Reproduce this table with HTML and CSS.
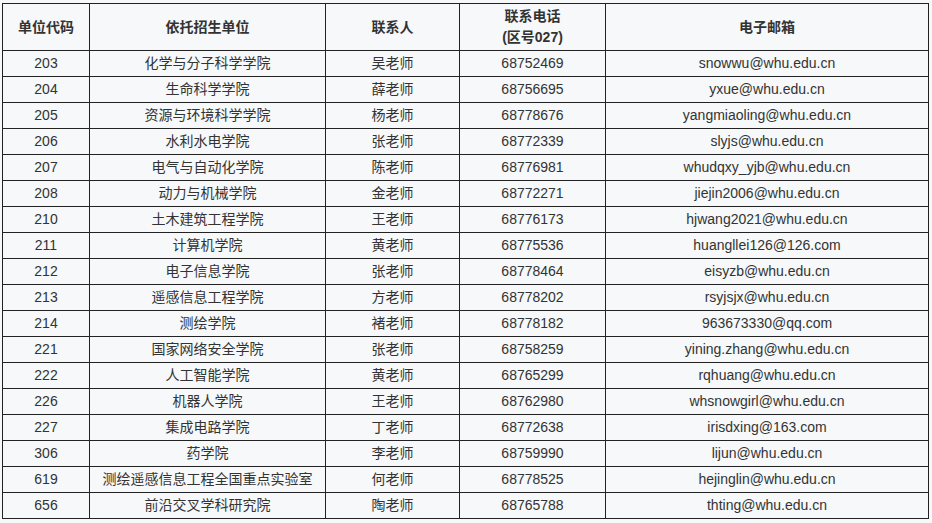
FILE: index.html
```html
<!DOCTYPE html>
<html lang="zh-CN">
<head>
<meta charset="utf-8">
<link rel="stylesheet" href="styles.css">
</head>
<body>
<div class="wrap">
<table class="contacts">
  <colgroup>
    <col class="c1"><col class="c2"><col class="c3"><col class="c4"><col class="c5">
  </colgroup>
  <thead>
    <tr><th>单位代码</th><th>依托招生单位</th><th>联系人</th><th>联系电话<br>(区号027)</th><th>电子邮箱</th></tr>
  </thead>
  <tbody>
    <tr><td>203</td><td>化学与分子科学学院</td><td>吴老师</td><td>68752469</td><td>snowwu@whu.edu.cn</td></tr>
    <tr><td>204</td><td>生命科学学院</td><td>薛老师</td><td>68756695</td><td>yxue@whu.edu.cn</td></tr>
    <tr><td>205</td><td>资源与环境科学学院</td><td>杨老师</td><td>68778676</td><td>yangmiaoling@whu.edu.cn</td></tr>
    <tr><td>206</td><td>水利水电学院</td><td>张老师</td><td>68772339</td><td>slyjs@whu.edu.cn</td></tr>
    <tr><td>207</td><td>电气与自动化学院</td><td>陈老师</td><td>68776981</td><td>whudqxy_yjb@whu.edu.cn</td></tr>
    <tr><td>208</td><td>动力与机械学院</td><td>金老师</td><td>68772271</td><td>jiejin2006@whu.edu.cn</td></tr>
    <tr><td>210</td><td>土木建筑工程学院</td><td>王老师</td><td>68776173</td><td>hjwang2021@whu.edu.cn</td></tr>
    <tr><td>211</td><td>计算机学院</td><td>黄老师</td><td>68775536</td><td>huangllei126@126.com</td></tr>
    <tr><td>212</td><td>电子信息学院</td><td>张老师</td><td>68778464</td><td>eisyzb@whu.edu.cn</td></tr>
    <tr><td>213</td><td>遥感信息工程学院</td><td>方老师</td><td>68778202</td><td>rsyjsjx@whu.edu.cn</td></tr>
    <tr><td>214</td><td>测绘学院</td><td>褚老师</td><td>68778182</td><td>963673330@qq.com</td></tr>
    <tr><td>221</td><td>国家网络安全学院</td><td>张老师</td><td>68758259</td><td>yining.zhang@whu.edu.cn</td></tr>
    <tr><td>222</td><td>人工智能学院</td><td>黄老师</td><td>68765299</td><td>rqhuang@whu.edu.cn</td></tr>
    <tr><td>226</td><td>机器人学院</td><td>王老师</td><td>68762980</td><td>whsnowgirl@whu.edu.cn</td></tr>
    <tr><td>227</td><td>集成电路学院</td><td>丁老师</td><td>68772638</td><td>irisdxing@163.com</td></tr>
    <tr><td>306</td><td>药学院</td><td>李老师</td><td>68759990</td><td>lijun@whu.edu.cn</td></tr>
    <tr><td>619</td><td>测绘遥感信息工程全国重点实验室</td><td>何老师</td><td>68778525</td><td>hejinglin@whu.edu.cn</td></tr>
    <tr><td>656</td><td>前沿交叉学科研究院</td><td>陶老师</td><td>68765788</td><td>thting@whu.edu.cn</td></tr>
  </tbody>
</table>
</div>
</body>
</html>
```

FILE: styles.css
```css
html, body {
  margin: 0;
  padding: 0;
  background: #f6f8f9;
}
.wrap {
  padding: 3px 0 0 2px;
}
.contacts {
  border-collapse: collapse;
  table-layout: fixed;
  width: 927px;
  font-family: "Liberation Sans", Arial, "Noto Sans CJK SC", sans-serif;
  font-size: 14px;
  color: #333;
}
.c1 { width: 87px; }
.c2 { width: 236px; }
.c3 { width: 134px; }
.c4 { width: 146px; }
.c5 { width: 323px; }
.contacts th,
.contacts td {
  border: 1px solid #222;
  text-align: center;
  vertical-align: middle;
  padding: 0;
  white-space: nowrap;
}
.contacts th {
  height: 46px;
  font-weight: bold;
  line-height: 21px;
}
.contacts td {
  height: 25px;
  line-height: 25px;
}
```
